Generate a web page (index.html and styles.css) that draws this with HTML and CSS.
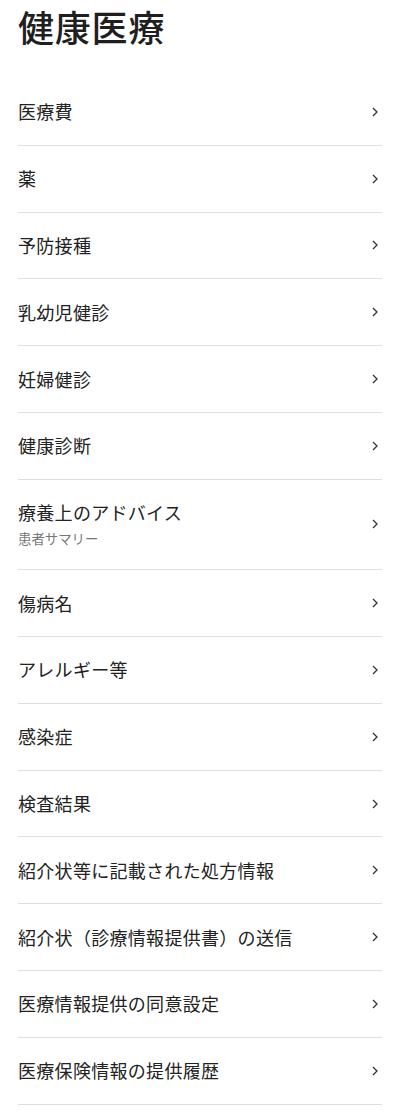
FILE: index.html
```html
<!DOCTYPE html>
<html lang="ja">
<head>
<meta charset="utf-8">
<title>健康医療</title>
<link rel="stylesheet" href="styles.css">
</head>
<body>
<main class="page">
  <h1 class="title">健康医療</h1>
  <ul class="menu">
    <li class="item"><div class="label"><span class="name">医療費</span></div><svg class="chev" viewBox="0 0 6 10"><polyline points="1,1 5,5 1,9"/></svg></li>
    <li class="item"><div class="label"><span class="name">薬</span></div><svg class="chev" viewBox="0 0 6 10"><polyline points="1,1 5,5 1,9"/></svg></li>
    <li class="item"><div class="label"><span class="name">予防接種</span></div><svg class="chev" viewBox="0 0 6 10"><polyline points="1,1 5,5 1,9"/></svg></li>
    <li class="item"><div class="label"><span class="name">乳幼児健診</span></div><svg class="chev" viewBox="0 0 6 10"><polyline points="1,1 5,5 1,9"/></svg></li>
    <li class="item"><div class="label"><span class="name">妊婦健診</span></div><svg class="chev" viewBox="0 0 6 10"><polyline points="1,1 5,5 1,9"/></svg></li>
    <li class="item"><div class="label"><span class="name">健康診断</span></div><svg class="chev" viewBox="0 0 6 10"><polyline points="1,1 5,5 1,9"/></svg></li>
    <li class="item"><div class="label"><span class="name">療養上のアドバイス</span><span class="sub">患者サマリー</span></div><svg class="chev" viewBox="0 0 6 10"><polyline points="1,1 5,5 1,9"/></svg></li>
    <li class="item"><div class="label"><span class="name">傷病名</span></div><svg class="chev" viewBox="0 0 6 10"><polyline points="1,1 5,5 1,9"/></svg></li>
    <li class="item"><div class="label"><span class="name">アレルギー等</span></div><svg class="chev" viewBox="0 0 6 10"><polyline points="1,1 5,5 1,9"/></svg></li>
    <li class="item"><div class="label"><span class="name">感染症</span></div><svg class="chev" viewBox="0 0 6 10"><polyline points="1,1 5,5 1,9"/></svg></li>
    <li class="item"><div class="label"><span class="name">検査結果</span></div><svg class="chev" viewBox="0 0 6 10"><polyline points="1,1 5,5 1,9"/></svg></li>
    <li class="item"><div class="label"><span class="name">紹介状等に記載された処方情報</span></div><svg class="chev" viewBox="0 0 6 10"><polyline points="1,1 5,5 1,9"/></svg></li>
    <li class="item"><div class="label"><span class="name">紹介状（診療情報提供書）の送信</span></div><svg class="chev" viewBox="0 0 6 10"><polyline points="1,1 5,5 1,9"/></svg></li>
    <li class="item"><div class="label"><span class="name">医療情報提供の同意設定</span></div><svg class="chev" viewBox="0 0 6 10"><polyline points="1,1 5,5 1,9"/></svg></li>
    <li class="item"><div class="label"><span class="name">医療保険情報の提供履歴</span></div><svg class="chev" viewBox="0 0 6 10"><polyline points="1,1 5,5 1,9"/></svg></li>
  </ul>
</main>
</body>
</html>
```

FILE: styles.css
```css
html, body {
  margin: 0;
  padding: 0;
  background: #ffffff;
}
body {
  font-family: "Noto Sans CJK JP", "Noto Sans", sans-serif;
  color: #222222;
}
.page {
  padding: 4px 18px 0 18px;
}
.title {
  margin: 0 0 31px 0;
  font-size: 36px;
  line-height: 44px;
  font-weight: 500;
  letter-spacing: 0.8px;
  color: #1f1f1f;
}
.menu {
  list-style: none;
  margin: 0;
  padding: 0;
}
.item {
  display: flex;
  align-items: center;
  justify-content: space-between;
  padding: 20.4px 0;
  border-bottom: 1px solid #dedede;
}
.label {
  display: flex;
  flex-direction: column;
  gap: 4px;
}
.name {
  font-size: 18px;
  line-height: 25px;
  letter-spacing: 0.3px;
  color: #222222;
}
.sub {
  font-size: 13.4px;
  line-height: 19.8px;
  color: #777777;
}
.chev {
  width: 6px;
  height: 10px;
  margin-right: 4px;
  fill: none;
  stroke: #333333;
  stroke-width: 1.3;
  flex: none;
}
```
